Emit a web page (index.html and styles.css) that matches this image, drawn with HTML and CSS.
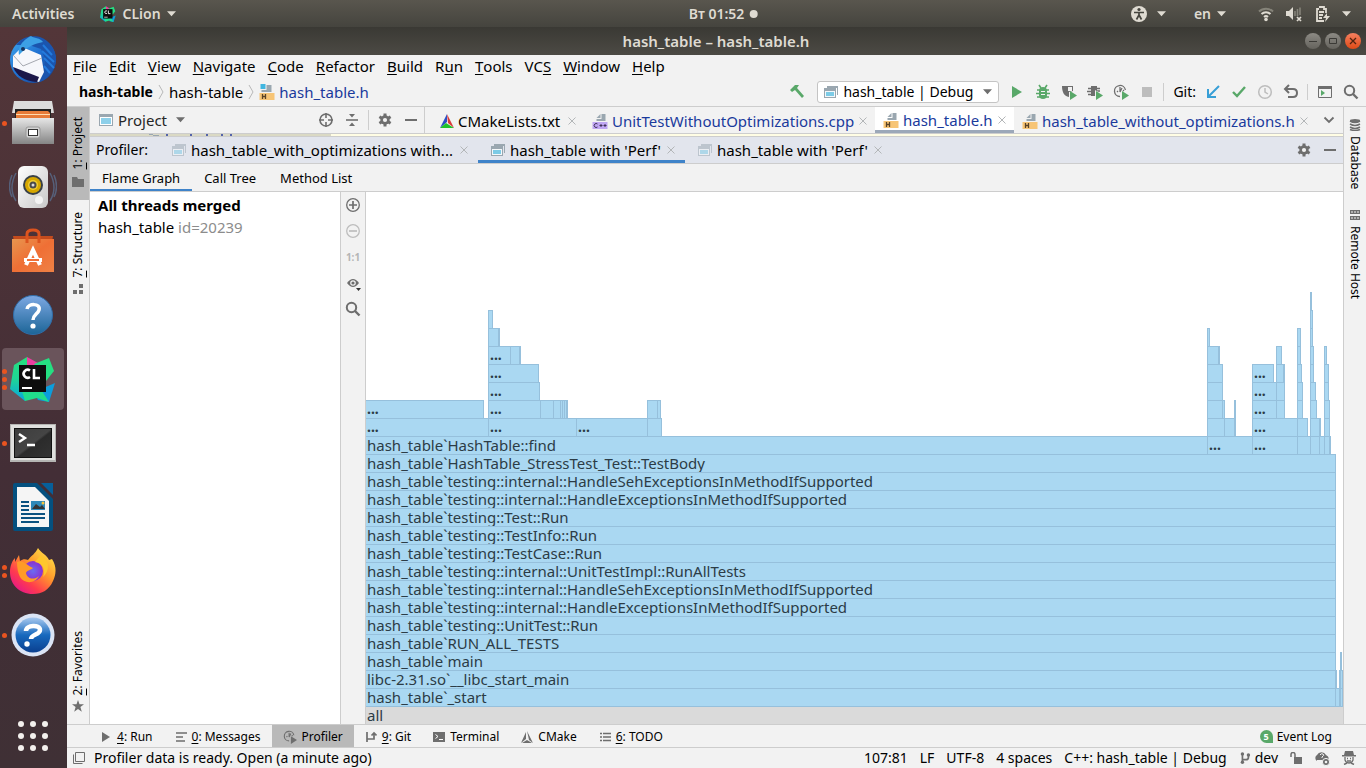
FILE: index.html
```html
<!DOCTYPE html>
<html lang="en">
<head>
<meta charset="utf-8">
<title>hash_table – hash_table.h</title>
<link rel="stylesheet" href="styles.css">
</head>
<body>
<svg class="defs" aria-hidden="true">
  <defs>
    <symbol id="window" viewBox="0 0 14 14"><path d="M3 1h11v9h-1V3H3z" fill="#9aa7b0"/><path d="M0 3h12v10H0z" fill="#9aa7b0"/><path d="M1 6h10v6H1z" fill="#f4f8fa"/><path d="M2 7h8v4H2z" fill="#7ccbe6"/></symbol>
    <symbol id="hfile" viewBox="0 0 15 16"><path d="M4 5 8 1v4zM9 1h4v7H4V6h5z" fill="#9aa7b0"/><path d="M0 9h15v7H0z" fill="#f7c576"/><path d="M3 10v5M6 10v5M3 12.500h3" stroke="#594328" stroke-width="1.300" fill="none"/></symbol>
    <symbol id="cppfile" viewBox="0 0 15 16"><path d="M4 5 8 1v4zM9 1h4v7H4V6h5z" fill="#9aa7b0"/><path d="M0 9h15v7H0z" fill="#bfa6f3"/><path d="M5 11a2 2 0 1 0 0 3M7 12.500h3M8.500 11v3M11 12.500h3M12.500 11v3" stroke="#403359" fill="none"/></symbol>
    <symbol id="close" viewBox="0 0 8 8"><path d="m.5.5 7 7m0-7-7 7" stroke="#b3b6b8" fill="none"/></symbol>
    <symbol id="caret" viewBox="0 0 10 6"><path d="M0 0h10L5 5.500z" fill="currentColor"/></symbol>
    <symbol id="gear" viewBox="0 0 14 14"><g stroke="#6e6e6e" stroke-width="3"><path d="M7 0.500v13M1.400 3.700l11.200 6.600M12.600 3.700 1.400 10.300"/></g><circle cx="7" cy="7" r="4.700" fill="#6e6e6e"/><circle cx="7" cy="7" r="2.100" fill="#f2f2f2"/></symbol>
    <symbol id="search" viewBox="0 0 16 16"><circle cx="6.500" cy="6.500" r="4.700" fill="none" stroke="#6e6e6e" stroke-width="2"/><path d="m10 10 4.500 4.500" stroke="#6e6e6e" stroke-width="2.400"/></symbol>
    <symbol id="profile" viewBox="0 0 16 16"><path d="M7 12.500A5.500 5.500 0 1 1 12.400 6M4 8l1-1M7 3v5L9 4M10 7l1-1" stroke="#6e6e6e" stroke-width="1.300" fill="none"/></symbol>
    <symbol id="branch" viewBox="0 0 12 14"><path d="M3 2v10M3 9h4c2 0 3-1 3-3V4" stroke="#6e6e6e" stroke-width="2" fill="none"/><circle cx="3" cy="2.200" r="2" fill="#6e6e6e"/><circle cx="10" cy="3.500" r="2" fill="#6e6e6e"/><circle cx="3" cy="12" r="2" fill="#6e6e6e"/></symbol>
    <linearGradient id="g-bird" x1="0" y1="0" x2="1" y2="1"><stop stop-color="#3fa9ee"/><stop offset=".5" stop-color="#1f6fd0"/><stop offset="1" stop-color="#15347c"/></linearGradient>
    <linearGradient id="g-steel" x1="0" y1="0" x2="0" y2="1"><stop stop-color="#e6e6e6"/><stop offset="1" stop-color="#858585"/></linearGradient>
    <linearGradient id="g-white" x1="0" y1="0" x2="1" y2="1"><stop stop-color="#fff"/><stop offset="1" stop-color="#c8c8c8"/></linearGradient>
    <linearGradient id="g-bag" x1="0" y1="0" x2="1" y2="1"><stop stop-color="#e8964f"/><stop offset=".5" stop-color="#ef6f35"/><stop offset="1" stop-color="#ef8145"/></linearGradient>
    <linearGradient id="g-help" x1="0" y1="0" x2="0" y2="1"><stop stop-color="#7da8e3"/><stop offset="1" stop-color="#1c6597"/></linearGradient>
    <linearGradient id="g-term" x1="0" y1="0" x2="1" y2="1"><stop stop-color="#3d3d3d"/><stop offset=".5" stop-color="#454545"/><stop offset=".55" stop-color="#2b2b2b"/><stop offset="1" stop-color="#333"/></linearGradient>
    <linearGradient id="g-fox" x1="1" y1="0" x2=".2" y2="1"><stop stop-color="#fff44f"/><stop offset=".45" stop-color="#ff9a2b"/><stop offset=".75" stop-color="#ff3b4e"/><stop offset="1" stop-color="#e3158c"/></linearGradient>
    <radialGradient id="g-globe"><stop stop-color="#6a6cf0"/><stop offset="1" stop-color="#8b2fd0"/></radialGradient>
    <linearGradient id="g-orb" x1="0" y1="0" x2="0" y2="1"><stop stop-color="#a8c9ef"/><stop offset=".5" stop-color="#1769be"/><stop offset="1" stop-color="#0a3f8f"/></linearGradient>
    <linearGradient id="g-cla" x1="0" y1="0" x2="0" y2="1"><stop stop-color="#26e07d"/><stop offset=".5" stop-color="#1fd596"/><stop offset="1" stop-color="#08a5e0"/></linearGradient>
    <symbol id="clion" viewBox="0 0 46 46"><path d="M4 9 17 1l4 8-4 22-2 14L0 33z" fill="url(#g-cla)"/><path d="m17 1 11 6-8 5h-3z" fill="#ec3ea0"/><path d="m24 8 15-6 5 13-8 10z" fill="#25df82"/><path d="M24 36 45 27l-6 19-11-2z" fill="#0c9ddc"/><path d="M12 35h20l7 11-12-4-12 3z" fill="#20dd8c"/><path d="M9 9h27v27H9z" fill="#0d0d0d"/><path d="M20 14.500a4 4 0 1 0 0 6.500M24 13v9h6" stroke="#fff" stroke-width="2.600" fill="none"/><path d="M12 31h10v2H12z" fill="#fff"/></symbol>
  </defs>
</svg>

<header class="topbar">
  <button class="top-btn">Activities</button>
  <button class="top-btn app"><svg class="i16"><use href="#clion"/></svg>CLion<svg class="caret"><use href="#caret"/></svg></button>
  <button class="top-btn clock">Вт 01:52<span class="dot"></span></button>
  <div class="tray">
    <button class="top-btn" aria-label="Accessibility"><svg class="i16" viewBox="0 0 16 16"><circle cx="8" cy="8" r="8" fill="#dfdbd2"/><circle cx="8" cy="3.500" r="1.600" fill="#45443e"/><path d="M3 6.500h10M8 6v4M8 9l-2.500 4.500M8 9l2.500 4.500" stroke="#45443e" stroke-width="1.700" fill="none"/></svg><svg class="caret"><use href="#caret"/></svg></button>
    <button class="top-btn">en<svg class="caret"><use href="#caret"/></svg></button>
    <button class="top-btn status" aria-label="System">
      <svg class="i16" viewBox="0 0 16 16"><path d="M1 5.500a10 10 0 0 1 14 0" stroke="#858379" stroke-width="2" fill="none"/><path d="M3.500 8a6.500 6.500 0 0 1 9 0M6 11a3 3 0 0 1 4 0" stroke="#dfdbd2" stroke-width="2" fill="none"/><circle cx="8" cy="13.500" r="1.800" fill="#dfdbd2"/></svg>
      <svg class="i16" viewBox="0 0 16 16"><path d="M0 5h3l4-4v13l-4-4H0z" fill="#dfdbd2"/><path d="M9 5v5M11.500 3v7M14 1.500V9" stroke="#858379" stroke-width="1.600"/><path d="m11 11 4 4m0-4-4 4" stroke="#dfdbd2" stroke-width="1.700"/></svg>
      <svg class="i16" viewBox="0 0 16 16"><path d="M5 1h5v2h2v4M10 15H3V3h2M5 6h5M5 9h4M5 12h3" stroke="#dfdbd2" stroke-width="1.800" fill="none"/><path d="m13 7-4 5h3l-1 4 5-6h-3z" fill="#dfdbd2"/></svg>
      <svg class="caret"><use href="#caret"/></svg>
    </button>
  </div>
</header>

<div class="desktop">
  <nav class="dock" aria-label="Dock">
    <button aria-label="Thunderbird"><svg viewBox="0 0 48 48"><circle cx="24" cy="25" r="23" fill="url(#g-bird)"/><path d="M7 10C14-1 28 1 31 2c10 4 17 13 16 25-4 14-12 20-18 20 8-9 10-20 3-33l-12-4z" fill="#1b55ae"/><path d="M4 21 13 12l19 8 3 17-5 10C16 43 7 37 4 32z" fill="#f6f7fb"/><path d="m4 20 10 11 19-8" fill="none" stroke="#a5a8b0"/><path d="m4 32 26 10-2 5C15 46 8 41 4 32z" fill="#1b1749"/><path d="M10 20C8 8 20 2 22 1c2 2 10 2 12 6-8 2-16 4-24 13z" fill="#3ca0e5"/><circle cx="14" cy="14" r="2" fill="#163460"/><path d="m34 10 9 10M33 16l12 11M35 23l10 10M35 31l6 7" stroke="#237bdd" stroke-width="2"/></svg></button>
    <button class="run1" aria-label="Files"><svg viewBox="0 0 48 48"><path d="M5 2h38l2 12H3z" fill="#dcdcdc"/><path d="M6 10h36v14H6z" fill="#222"/><path d="M7 14 9 12h30l2 2v6H7z" fill="#e77b38"/><path d="M7 15.500h34" stroke="#ffdbb0" stroke-width="1"/><path d="M3 19h42v26H3z" fill="url(#g-steel)"/><rect x="17" y="28" width="14" height="11" rx="2" fill="#d3d3d3" stroke="#999"/><rect x="19.500" y="30.500" width="9" height="6" fill="#fff" stroke="#333"/></svg></button>
    <button aria-label="Rhythmbox"><svg viewBox="0 0 48 48"><path d="M7 10q-8 15 0 28M3 12q-5 12 0 22M41 10q8 15 0 28M45 12q5 12 0 22" stroke="#56607a" stroke-width="1.500" fill="none"/><rect x="9" y="3" width="30" height="42" rx="6" fill="url(#g-white)"/><circle cx="24" cy="22" r="10" fill="#384047"/><circle cx="24" cy="22" r="8" fill="#d6a700"/><circle cx="24" cy="22" r="5" fill="#f1ce31"/><circle cx="24" cy="22" r="3.500" fill="#4a4a4a"/><circle cx="24" cy="22" r="1.500" fill="#ddd"/><circle cx="30" cy="37" r="4" fill="#f3f3f3"/></svg></button>
    <button aria-label="Software"><svg viewBox="0 0 48 48"><path d="M4 9h40l-1 6H5z" fill="#c34b1d"/><path d="M3 12h42v33H3z" fill="url(#g-bag)"/><path d="M18 16V7q0-4 6-4t6 4v9" stroke="#dc541f" stroke-width="3" fill="none"/><path d="m17 38 7-15 7 15M15 33h18" stroke="#fff" stroke-width="4" fill="none"/><path d="M18 33h12" stroke="#ef7038" stroke-width="2"/></svg></button>
    <button aria-label="Help"><svg viewBox="0 0 48 48"><circle cx="24" cy="24" r="19.500" fill="url(#g-help)" stroke="#306da8"/><path d="M18 18c1-6 14-6 12 1-1 4-6 5-6 10" stroke="#fff" stroke-width="3.500" fill="none"/><circle cx="24" cy="35" r="2.600" fill="#fff"/></svg></button>
    <button class="active run3" aria-label="CLion"><svg viewBox="0 0 48 48"><use href="#clion" x="1" y="1" width="46" height="46"/></svg></button>
    <button class="run1" aria-label="Terminal"><svg viewBox="0 0 48 48"><path d="M1 5h46v38H1z" fill="#b5b5b3"/><path d="M2 6h44v35H2z" fill="#e0e0de"/><path d="M5 9h38v30H5z" fill="#111"/><path d="M6 10h36v28H6z" fill="url(#g-term)"/><path d="m10 15 6 4-6 4M18 26h8" stroke="#fff" stroke-width="2.400" fill="none"/></svg></button>
    <button aria-label="LibreOffice Writer"><svg viewBox="0 0 48 48"><path d="M6 0h22l16 16v30q0 2-2 2H6q-2 0-2-2V2q0-2 2-2z" fill="#04507f"/><path d="M32 0h12v12z" fill="#075f9a"/><path d="M8 4h18l14 14v26H8z" fill="#f5f5f5"/><path d="M12 19h8M12 23h8M12 27h8M12 31h24M12 35h24M12 39h18" stroke="#0b5280" stroke-width="2"/><path d="M22 18h14v9H22z" fill="#2d88b8"/><path d="m23 26 4-5 4 3 2-2 3 4z" fill="#343434"/><circle cx="34" cy="20" r="1.500" fill="#f6c43b"/></svg></button>
    <button class="run2" aria-label="Firefox"><svg viewBox="0 0 48 48"><path d="M29 1c3 5 9 7 11 12l3-1c6 9 3 18 1 22C40 43 33 47 24 47 10 47 1 37 1 25c0-6 2-11 5-14v4l4-7 1 6c3-2 5-2 8-1 4-5 7-6 10-12z" fill="url(#g-fox)"/><circle cx="24" cy="24" r="10" fill="url(#g-globe)"/><path d="M8 15c6-3 9 3 16 6-2 2-6 2-7 5 1 5 7 8 13 3-4 8-15 8-19 1-2-4-3-9-3-15z" fill="#ff9b27"/><path d="M26 15c8 1 11 8 8 15 7-6 7-17-2-22z" fill="#ffc72d"/></svg></button>
    <button class="run1" aria-label="Assistant"><svg viewBox="0 0 48 48"><circle cx="24" cy="24" r="21.500" fill="#dbe4f5"/><circle cx="24" cy="24" r="17.500" fill="url(#g-orb)"/><path d="M17 20c0-6 14-7 14-1 0 5-9 4-9 9" stroke="#fff" stroke-width="4.500" fill="none"/><circle cx="18" cy="33" r="2.700" fill="#fff"/></svg></button>
    <button class="apps" aria-label="Show applications"><svg viewBox="0 0 48 48" fill="#f3f0ed"><circle cx="12" cy="12" r="3"/><circle cx="24" cy="12" r="3"/><circle cx="36" cy="12" r="3"/><circle cx="12" cy="24" r="3"/><circle cx="24" cy="24" r="3"/><circle cx="36" cy="24" r="3"/><circle cx="12" cy="36" r="3"/><circle cx="24" cy="36" r="3"/><circle cx="36" cy="36" r="3"/></svg></button>
  </nav>

  <main class="ide">
    <div class="titlebar">
      <h1>hash_table – hash_table.h</h1>
      <div class="winbtns">
        <button aria-label="Minimize"><svg viewBox="0 0 16 16"><path d="M4 8.500h8" stroke="#3b3a36"/></svg></button>
        <button aria-label="Maximize"><svg viewBox="0 0 16 16"><path d="M4.500 5.500h7v5h-7z" stroke="#3b3a36" fill="none"/></svg></button>
        <button class="close" aria-label="Close"><svg viewBox="0 0 16 16"><path d="m5 5 6 6m0-6-6 6" stroke="#51230f" stroke-width="1.300"/></svg></button>
      </div>
    </div>
    <nav class="menubar">
      <button><u>F</u>ile</button><button><u>E</u>dit</button><button><u>V</u>iew</button><button><u>N</u>avigate</button><button><u>C</u>ode</button><button><u>R</u>efactor</button><button><u>B</u>uild</button><button>R<u>u</u>n</button><button><u>T</u>ools</button><button>VC<u>S</u></button><button><u>W</u>indow</button><button><u>H</u>elp</button>
    </nav>
    <div class="toolbar">
      <div class="crumbs">
        <a href="#project"><b>hash-table</b></a><svg class="sep" viewBox="0 0 6 16"><path d="m1 1 4 7-4 7" stroke="#b8b8b8" fill="none"/></svg>
        <a href="#folder">hash-table</a><svg class="sep" viewBox="0 0 6 16"><path d="m1 1 4 7-4 7" stroke="#b8b8b8" fill="none"/></svg>
        <a href="#file" class="vcs"><svg class="i16" viewBox="0 0 15 16"><path d="M1 0h5v5H1z" fill="#40b6e0"/><path d="M7 1h5v7H2V6h5z" fill="#9aa7b0"/><path d="M0 9h15v7H0z" fill="#f7c576"/><path d="M3 10v5M6 10v5M3 12.500h3" stroke="#594328" stroke-width="1.300" fill="none"/></svg>hash_table.h</a>
      </div>
      <div class="actions">
        <button aria-label="Build"><svg class="i16" viewBox="0 0 16 16"><path d="M1 6 6 1h4L8 4l7 8-2 2-7-8-3 2z" fill="#59a869"/></svg></button>
        <button class="config"><svg class="i14"><use href="#window"/></svg>hash_table | Debug<svg class="caret"><use href="#caret"/></svg></button>
        <div class="runs">
          <button aria-label="Run"><svg class="i16" viewBox="0 0 16 16"><path d="M3 2v12l10-6z" fill="#59a869"/></svg></button>
          <button aria-label="Debug"><svg class="i16" viewBox="0 0 16 16"><path d="m4 1 2 3m6-3-2 3M2 6h12M1 9.500h14M2 13h12" stroke="#59a869" stroke-width="1.600"/><rect x="4" y="3" width="8" height="12" rx="4" fill="#59a869"/><path d="M6 7.500h4M6 10.500h4" stroke="#f2f2f2"/></svg></button>
          <button aria-label="Coverage"><svg class="i16" viewBox="0 0 16 16"><path d="M1 2h11v5L8 8v5C3 12 1 8 1 2z" fill="#6e6e6e"/><path d="M7 3h4v4H7z" fill="#f2f2f2"/><path d="M9 7v9l7-4.500z" fill="#59a869"/></svg></button>
          <button aria-label="Valgrind"><svg class="i16" viewBox="0 0 16 16"><path d="M4 2h6v10H4z" fill="#6e6e6e"/><path d="M1 4.500h12M0 7.500h4M1 10.500h4M10 7h3" stroke="#6e6e6e" stroke-width="1.300"/><path d="M8 6v10l8-5z" fill="#f2f2f2"/><path d="M9 7v9l7-4.500z" fill="#59a869"/></svg></button>
          <button aria-label="Profile"><svg class="i16" viewBox="0 0 16 16"><use href="#profile"/><path d="M9 7v9l7-4.500z" fill="#59a869"/></svg></button>
          <button aria-label="Stop"><svg class="i16" viewBox="0 0 16 16"><path d="M3 3h10v10H3z" fill="#bdbdbd"/></svg></button>
        </div>
        <span class="git">Git:</span>
        <div class="runs">
          <button aria-label="Update"><svg class="i16" viewBox="0 0 16 16"><path d="M14 2 4 12M3 5v8h8" stroke="#389fd6" stroke-width="2" fill="none"/></svg></button>
          <button aria-label="Commit"><svg class="i16" viewBox="0 0 16 16"><path d="m2 8 4 4 8-9" stroke="#59a869" stroke-width="2.400" fill="none"/></svg></button>
          <button aria-label="History"><svg class="i16" viewBox="0 0 16 16"><circle cx="8" cy="8" r="6.300" fill="none" stroke="#bdbdbd" stroke-width="1.500"/><path d="M8 4v4l3 2" stroke="#bdbdbd" stroke-width="1.500" fill="none"/></svg></button>
          <button aria-label="Rollback"><svg class="i16" viewBox="0 0 16 16"><path d="M6 1 2 5l4 4M2 5h8q4 0 4 4t-4 4H5" stroke="#6e6e6e" stroke-width="2" fill="none"/></svg></button>
        </div>
        <div class="runs last">
          <button aria-label="Run anything"><svg class="i16" viewBox="0 0 16 16"><path d="M1.500 2.500h13v11h-13z" stroke="#6e6e6e" fill="none"/><path d="M1 2h14v3H1z" fill="#6e6e6e"/><path d="M4 6v6l4-3z" fill="#59a869"/></svg></button>
          <button aria-label="Search everywhere"><svg class="i16"><use href="#search"/></svg></button>
        </div>
      </div>
    </div>

    <div class="workspace">
      <aside class="stripe left">
        <button class="on"><svg viewBox="0 0 12 12"><path d="M0 1h5l1 2h6v8H0z" fill="#6e6e6e"/></svg><span><u>1</u>: Project</span></button>
        <button class="second"><svg viewBox="0 0 12 12" fill="#6e6e6e"><path d="M7 1h4v4H7zM1 7h4v4H1zM7 7h4v4H7z"/></svg><span><u>7</u>: Structure</span></button>
        <button class="bottom"><svg class="star" viewBox="0 0 12 12"><path d="m6 0 1.500 4.200H12L8.400 7l1.400 4.800L6 9l-3.800 2.800L3.600 7 0 4.200h4.500z" fill="#6e6e6e"/></svg><span><u>2</u>: Favorites</span></button>
      </aside>

      <section class="center">
        <div class="editor-head">
          <div class="project-head">
            <button class="project"><svg class="i14" viewBox="0 0 14 14"><path d="M0 1h14v12H0z" fill="#9aa7b0"/><path d="M1 4h12v8H1z" fill="#fff"/><path d="M2 5h10v6H2z" fill="#8dd0ea"/></svg>Project<svg class="caret"><use href="#caret"/></svg></button>
            <button aria-label="Locate"><svg class="i16" viewBox="0 0 16 16"><circle cx="8" cy="8" r="6" fill="none" stroke="#6e6e6e" stroke-width="1.600"/><path d="M8 1v5M8 10v5M1 8h5M10 8h5" stroke="#6e6e6e" stroke-width="1.600"/></svg></button>
            <button aria-label="Collapse all"><svg class="i16" viewBox="0 0 16 16"><path d="M2 8h12" stroke="#6e6e6e" stroke-width="1.600"/><path d="M5 2h6L8 5.500zM5 14h6l-3-3.500z" fill="#6e6e6e"/></svg></button>
            <i class="vr"></i>
            <button class="tool" aria-label="Settings"><svg class="i14"><use href="#gear"/></svg></button>
            <button class="tool" aria-label="Hide"><svg class="i14" viewBox="0 0 14 14"><path d="M1 7h12" stroke="#6e6e6e" stroke-width="2"/></svg></button>
          </div>
          <div class="etabs">
            <div class="etab cm"><svg class="i14" viewBox="0 0 14 14"><path d="M7 0v8L0 14z" fill="#2b4fc4"/><path d="m7 0 7 14-6-5z" fill="#d93a3a"/><path d="m0 14 6-5 8 5z" fill="#1fc22b"/></svg><span class="plain">CMakeLists.txt</span><button aria-label="Close"><svg><use href="#close"/></svg></button></div>
            <div class="etab cpp"><svg class="i16"><use href="#cppfile"/></svg><span>UnitTestWithoutOptimizations.cpp</span><button aria-label="Close"><svg><use href="#close"/></svg></button></div>
            <div class="etab sel"><svg class="i16"><use href="#hfile"/></svg><span>hash_table.h</span><button aria-label="Close"><svg><use href="#close"/></svg></button></div>
            <div class="etab wo"><svg class="i16"><use href="#hfile"/></svg><span>hash_table_without_optimizations.h</span><button aria-label="Close"><svg><use href="#close"/></svg></button></div>
            <button class="more" aria-label="More tabs"><svg viewBox="0 0 12 8"><path d="m1.500 1.500 4.500 4.500 4.500-4.500" stroke="#6e6e6e" stroke-width="1.800" fill="none"/></svg></button>
          </div>
        </div>
        <div class="sliver"><svg viewBox="0 0 241 2"><path d="M59 0h4v1h6v1h-6V1h-4z" fill="#9aa7b0"/><path d="M76 0h2v2h-2zM100 0h2v2h-2zM116 0h2v2h-2zM131 0h2v2h-2zM140 0h2v2h-2z" fill="#5564a8"/></svg></div>

        <div class="prof-head">
          <span class="prof-title">Profiler:</span>
          <div class="ptab dim first"><svg class="i14"><use href="#window"/></svg><span>hash_table_with_optimizations with...</span><button aria-label="Close"><svg><use href="#close"/></svg></button></div>
          <div class="ptab sel"><svg class="i14"><use href="#window"/></svg><span>hash_table with 'Perf'</span><button aria-label="Close"><svg><use href="#close"/></svg></button></div>
          <div class="ptab dim"><svg class="i14"><use href="#window"/></svg><span>hash_table with 'Perf'</span><button aria-label="Close"><svg><use href="#close"/></svg></button></div>
          <div class="prof-tools">
            <button aria-label="Settings"><svg class="i14"><use href="#gear"/></svg></button>
            <button aria-label="Hide"><svg class="i14" viewBox="0 0 14 14"><path d="M1 7h12" stroke="#6e6e6e" stroke-width="2"/></svg></button>
          </div>
        </div>
        <div class="views"><button class="sel">Flame Graph</button><button>Call Tree</button><button>Method List</button></div>

        <div class="profile">
          <div class="threads"><p><b>All threads merged</b></p><p>hash_table <span>id=20239</span></p></div>
          <div class="zoombar">
            <button aria-label="Zoom in"><svg class="i16" viewBox="0 0 16 16"><circle cx="8" cy="8" r="6.300" fill="none" stroke="#6e6e6e" stroke-width="1.300"/><path d="M4 8h8M8 4v8" stroke="#6e6e6e" stroke-width="1.700"/></svg></button>
            <button aria-label="Zoom out"><svg class="i16" viewBox="0 0 16 16"><circle cx="8" cy="8" r="6.300" fill="none" stroke="#bdbdbd" stroke-width="1.300"/><path d="M4 8h8" stroke="#bdbdbd" stroke-width="1.700"/></svg></button>
            <button class="one">1:1</button>
            <button aria-label="Presentation"><svg class="i16" viewBox="0 0 16 16"><path d="M2 8q6-8 12 0-6 8-12 0z" fill="#6e6e6e"/><circle cx="8" cy="8" r="2.800" fill="#f2f2f2"/><circle cx="8" cy="8" r="1.600" fill="#6e6e6e"/><path d="M11 13h5l-2.500 3z" fill="#333"/></svg></button>
            <button aria-label="Find"><svg class="i16"><use href="#search"/></svg></button>
          </div>
          <div class="flame" id="flame"></div>
        </div>
      </section>

      <aside class="stripe right">
        <button><svg viewBox="0 0 12 12"><path d="M1 2q5 3 10 0M1 5q5 3 10 0M1 8q5 3 10 0M1 10.500q5 2 10 0" stroke="#6e6e6e" stroke-width="1.500" fill="none"/><ellipse cx="6" cy="1.500" rx="5" ry="1.500" fill="#6e6e6e"/></svg><span>Database</span></button>
        <button class="second"><svg viewBox="0 0 12 12" fill="#6e6e6e"><path d="M1 1h10v4H1zM1 7h10v4H1z"/><path d="M3 2v2M6 2v2M3 8v2M6 8v2M9 2v2M9 8v2" stroke="#f2f2f2"/></svg><span>Remote Host</span></button>
      </aside>
    </div>

    <nav class="tools">
      <button><svg class="i12" viewBox="0 0 12 12"><path d="M2 1v10l8-5z" fill="#6e6e6e"/></svg><span><u>4</u>: Run</span></button>
      <button><svg class="i12" viewBox="0 0 12 12"><path d="M1 2h11M1 6h7M1 10h9" stroke="#6e6e6e" stroke-width="1.700"/></svg><span><u>0</u>: Messages</span></button>
      <button class="on"><svg class="i14" viewBox="0 0 16 16"><use href="#profile"/><path d="M9 7v9l7-4.500z" fill="#6e6e6e"/></svg><span>Profiler</span></button>
      <button><svg class="i12" viewBox="0 0 12 12"><path d="M2 1v10M2 8h7V2M6.500 4.500 9 2l2.500 2.500" stroke="#6e6e6e" stroke-width="1.700" fill="none"/></svg><span><u>9</u>: Git</span></button>
      <button><svg class="i12" viewBox="0 0 12 12"><path d="M0 1h12v10H0z" fill="#6e6e6e"/><path d="m2.500 3.500 2.500 2-2.500 2M6 8.500h4" stroke="#fff" fill="none"/></svg><span>Terminal</span></button>
      <button><svg class="i12" viewBox="0 0 12 12"><path d="m6 0 6 12-4-3zM5 1v7l-5 4zM1 12l5-3 5 3z" fill="#6e6e6e"/></svg><span>CMake</span></button>
      <button><svg class="i12" viewBox="0 0 12 12"><path d="M1 2.500h2M4 2.500h8M1 6h2M4 6h8M1 9.500h2M4 9.500h8" stroke="#6e6e6e" stroke-width="1.500"/></svg><span><u>6</u>: TODO</span></button>
      <button class="event"><i>5</i><span>Event Log</span></button>
    </nav>
    <footer class="statusbar">
      <button aria-label="Tool windows"><svg class="i14" viewBox="0 0 14 14"><path d="M3.500 1.500h9v9h-9zM1.500 3.500v9h9" stroke="#6e6e6e" fill="none"/></svg></button>
      <span class="msg">Profiler data is ready. Open (a minute ago)</span>
      <button>107:81</button><button>LF</button><button>UTF-8</button><button>4 spaces</button><button class="ctx">C++: hash_table | Debug</button>
      <button class="git-branch"><svg class="i12"><use href="#branch"/></svg>dev</button>
      <button aria-label="Writable"><svg class="i12" viewBox="0 0 12 12"><path d="M4 5h8v7H4z" fill="#6e6e6e"/><path d="M1 5V2.500q0-2 2-2t2 2V6" stroke="#6e6e6e" stroke-width="1.500" fill="none"/></svg></button>
      <button aria-label="Sync"><svg class="i16" viewBox="0 0 16 16"><path d="M3 11a3.500 3.500 0 0 1 0-6 5 5 0 0 1 9 0q4 2 2 5H3z" fill="#6e6e6e"/><path d="M6 5q1-2 3-1t-1 3v1" stroke="#f2f2f2" fill="none"/><circle cx="12" cy="12" r="3.600" fill="#6e6e6e" stroke="#f2f2f2"/><circle cx="12" cy="12" r="1.300" fill="#f2f2f2"/></svg></button>
      <button aria-label="Inspections"><svg class="i14" viewBox="0 0 14 14"><path d="M3 0h8l1 4h2v1.500H0V4h2z" fill="#6e6e6e"/><path d="M3 6v3q1 3 4 3t4-3V6" stroke="#6e6e6e" stroke-width="1.300" fill="none"/><path d="M5 7.500h1M8 7.500h1M5 10h4M2 13.500 5 12M12 13.500 9 12" stroke="#6e6e6e" stroke-width="1.500"/></svg></button>
    </footer>
  </main>
</div>
<script src="flame.js"></script>
</body>
</html>
```
FILE: flame.js
```js
// Each row lists its frames as [start, end, label], from the deepest call to the root.
const SPAN = 977;
const body = (label) => [[0, 970, label]];
const rows = [
  [[944, 946]],
  [[122, 127], [944, 947]],
  [[122, 133], [132, 134], [841, 844], [931, 935], [944, 947]],
  [[122, 145, '...'], [144, 154], [153, 155], [841, 853], [852, 854], [910, 916], [931, 935], [944, 948], [958, 961]],
  [[122, 173, '...'], [841, 857], [886, 908, '...'], [910, 918], [917, 919], [931, 936], [944, 948], [958, 963]],
  [[122, 174, '...'], [841, 857], [886, 911, '...'], [910, 919], [931, 937], [944, 950], [958, 963]],
  [[0, 118, '...'], [122, 175, '...'], [174, 188], [187, 195], [194, 197], [196, 199], [198, 201], [200, 202], [281, 292], [291, 295], [841, 857], [856, 859], [868, 870], [886, 911, '...'], [910, 919], [931, 937], [944, 951], [958, 964]],
  [[0, 123, '...'], [122, 211, '...'], [210, 282, '...'], [281, 296], [841, 859], [858, 869], [868, 870], [886, 932, '...'], [931, 942], [944, 954], [953, 955], [958, 964]],
  [[0, 842, 'hash_table`HashTable::find'], [841, 887, '...'], [886, 932, '...'], [931, 945], [944, 954], [953, 959], [958, 964], [963, 965]],
  body('hash_table`HashTable_StressTest_Test::TestBody'),
  body('hash_table`testing::internal::HandleSehExceptionsInMethodIfSupported'),
  body('hash_table`testing::internal::HandleExceptionsInMethodIfSupported'),
  body('hash_table`testing::Test::Run'),
  body('hash_table`testing::TestInfo::Run'),
  body('hash_table`testing::TestCase::Run'),
  body('hash_table`testing::internal::UnitTestImpl::RunAllTests'),
  body('hash_table`testing::internal::HandleSehExceptionsInMethodIfSupported'),
  body('hash_table`testing::internal::HandleExceptionsInMethodIfSupported'),
  body('hash_table`testing::UnitTest::Run'),
  body('hash_table`RUN_ALL_TESTS'),
  [[0, 970, 'hash_table`main'], [974, 976]],
  [[0, 970, 'libc-2.31.so`__libc_start_main'], [969, 971], [973, 975], [974, 977]],
  [[0, 970, 'hash_table`_start'], [969, 974], [973, 975], [974, 977]],
  [[0, 977, 'all']]
];

const flame = document.getElementById('flame');
rows.forEach((frames, index) => {
  const row = document.createElement('div');
  row.className = index === rows.length - 1 ? 'frow root' : 'frow';
  let previous = 0;
  frames.forEach(([start, end, label]) => {
    const frame = document.createElement('div');
    frame.className = ['frame', label === '...' && 'short', start === 0 && 'edge'].filter(Boolean).join(' ');
    frame.style.marginLeft = (start - previous) / SPAN * 100 + '%';
    frame.style.width = (end - start) / SPAN * 100 + '%';
    if (label) frame.textContent = label;
    row.append(frame);
    previous = end;
  });
  flame.append(row);
});
```
FILE: styles.css
```css
* { box-sizing: border-box; }
html, body { height: 100%; margin: 0; }
body { display: flex; flex-direction: column; overflow: hidden; font: 15px/18px "Noto Sans", "Open Sans", sans-serif; color: #000; background: #f2f2f2; }
button { display: flex; align-items: center; margin: 0; padding: 0; border: 0; background: none; font: inherit; color: inherit; white-space: nowrap; }
a { display: flex; align-items: center; gap: 4px; color: inherit; text-decoration: none; }
u { text-underline-offset: 2px; }
svg { display: block; flex: none; }
.defs { position: absolute; width: 0; height: 0; }
.i12 { width: 12px; height: 12px; }
.i14 { width: 14px; height: 14px; }
.i16 { width: 16px; height: 16px; }
.caret { width: 9px; height: 6px; }

.topbar { flex: none; display: grid; grid-template-columns: auto auto 1fr auto; align-items: center; height: 27px; padding: 0 15px 0 12px; color: #dfdbd2; background: linear-gradient(#59564e, #45443e); font-size: 14px; font-weight: 600; }
.top-btn { gap: 7px; }
.app { margin-left: 26px; gap: 6px; }
.clock { position: absolute; left: 50%; transform: translateX(-50%); margin-left: 40px; gap: 5px; }
.dot { width: 8px; height: 8px; border-radius: 50%; background: #dfdbd2; }
.tray { grid-column: 4; display: flex; gap: 28px; }
.tray .top-btn { gap: 10px; }
.tray .top-btn:nth-child(2) { gap: 6px; }
.tray .status { gap: 12px; margin-left: 4px; }

.desktop { flex: 1; min-height: 0; display: flex; }
.dock { flex: none; width: 67px; display: flex; flex-direction: column; gap: 2px; padding: 1px 0; background: linear-gradient(#533639, #432e36 60%, #3f3035); }
.dock button { width: 62px; height: 62px; margin-left: 2px; justify-content: center; border-radius: 4px; position: relative; }
.dock svg { width: 48px; height: 48px; }
.dock .active { background: #6a545b; }
.dock .apps { margin-top: auto; }
.run1::before, .run2::before, .run3::before { content: ""; position: absolute; left: 0; top: 50%; width: 5px; height: 5px; margin-top: -2px; border-radius: 50%; background: #e95420; }
.run2::before { margin-top: -6px; box-shadow: 0 8px #e95420; }
.run3::before { box-shadow: 0 -8px #e95420, 0 8px #e95420; }

.ide { flex: 1; min-width: 0; display: flex; flex-direction: column; }
.titlebar { flex: none; display: grid; grid-template-columns: 60px 1fr 61px; align-items: center; height: 28px; background: linear-gradient(#3a3934, #4c4a44); color: #dfdbd2; }
.titlebar h1 { grid-column: 2; margin: 0; font-size: 15px; font-weight: 600; text-align: center; }
.winbtns { display: flex; gap: 4px; }
.winbtns button { width: 16px; height: 16px; border-radius: 50%; background: linear-gradient(#8c8a84, #65635d); }
.winbtns svg { width: 16px; height: 16px; }
.winbtns .close { background: linear-gradient(#f58060, #df4a16); }

.menubar { flex: none; display: flex; gap: 12px; height: 22px; padding-left: 6px; }
.toolbar { flex: none; display: flex; justify-content: space-between; height: 30px; padding-left: 12px; border-bottom: 1px solid #cdcdcd; }
.crumbs { display: flex; align-items: center; gap: 5px; }
.crumbs b { font-size: 14px; }
.sep { width: 6px; height: 16px; }
.vcs { color: #1a3a9c; }
.actions { display: flex; align-items: center; font-size: 14px; }
.config { height: 22px; width: 182px; margin: 0 10px 0 12px; padding: 0 6px; gap: 5px; border: 1px solid #c4c4c4; border-radius: 3px; background: #fff; }
.config .caret { margin-left: auto; color: #6e6e6e; }
.runs { display: flex; gap: 10px; }
.git { margin: 0 9px 0 8px; padding-left: 9px; border-left: 1px solid #cdcdcd; }
.last { margin-left: 8px; padding: 0 7px 0 9px; border-left: 1px solid #cdcdcd; }

.workspace { flex: 1; min-height: 0; display: flex; }
.stripe { flex: none; width: 23px; display: flex; flex-direction: column; font-size: 12px; }
.stripe.left { border-right: 1px solid #cdcdcd; }
.stripe.right { border-left: 1px solid #cdcdcd; padding-top: 12px; }
.stripe button { flex-direction: column; gap: 5px; width: 22px; }
.stripe svg { width: 12px; height: 12px; }
.stripe span { writing-mode: vertical-rl; }
.left button { flex-direction: column-reverse; }
.left span { transform: rotate(180deg); }
.left .on { height: 93px; padding-top: 10px; justify-content: flex-end; background: #b9b9b9; }
.left .on svg { margin-top: 2px; }
.left .second { margin-top: 12px; }
.left .bottom { margin-top: auto; padding-bottom: 12px; }
.right .second { margin-top: 20px; }

.center { flex: 1; min-width: 0; display: flex; flex-direction: column; }
.editor-head { flex: none; display: flex; height: 26px; }
.project-head { flex: none; width: 335px; display: flex; align-items: center; gap: 10px; padding: 0 5px 0 9px; border-right: 1px solid #cdcdcd; }
.project { gap: 5px; margin-right: auto; color: #262626; }
.project .caret { margin-left: 4px; color: #6e6e6e; }
.tool { width: 16px; justify-content: center; }
.vr { width: 1px; height: 20px; margin: 0 -2px; background: #cdcdcd; }
.etabs { flex: 1; min-width: 0; display: flex; }
.etab { display: flex; align-items: center; gap: 4px; padding-top: 2px; color: #1a3a9c; white-space: nowrap; }
.etab span { flex: 1; }
.etab .plain { color: #000; }
.cm { width: 151px; padding-left: 15px; }
.cpp { width: 299px; padding-left: 16px; padding-right: 8px; }
.etab.sel { width: 139px; padding: 3px 8px 0; background: #fff; border-bottom: 3px solid #9ca8b8; }
.wo { width: 302px; padding-left: 8px; padding-right: 8px; }
.etab button svg, .ptab button svg { width: 8px; height: 8px; }
.more { margin: 0 8px 0 auto; }
.more svg { width: 12px; height: 8px; }
.sliver { flex: none; height: 3px; border-top: 1px solid #cdcdcd; background: #fffde4; }
.sliver svg { width: 241px; height: 2px; background: #dad9c4; }

.prof-head { flex: none; display: flex; height: 28px; border: solid #cdcdcd; border-width: 1px 0; background: #e2e5ed; white-space: nowrap; }
.prof-title { width: 73px; padding-left: 6px; align-self: center; font-size: 14px; }
.ptab { display: flex; align-items: center; gap: 5px; width: 207px; padding: 0 10px 0 13px; }
.ptab span { flex: 1; }
.ptab.first { width: 315px; padding-left: 9px; }
.ptab.sel { border-bottom: 3px solid #3f83c9; padding-top: 3px; }
.dim > svg { opacity: .5; }
.prof-tools { display: flex; gap: 12px; margin-left: auto; padding-right: 6px; }

.views { flex: none; display: flex; height: 28px; border-bottom: 1px solid #cdcdcd; font-size: 13px; }
.views button { padding: 0 12px; }
.views .sel { padding: 2px 12px 0; border-bottom: 2px solid #3f83c9; }

.profile { flex: 1; min-height: 0; display: flex; background: #fff; }
.threads { flex: none; width: 250px; padding: 2px 8px; }
.threads p { margin: 0; line-height: 22px; }
.threads span { color: #8c8c8c; }
.zoombar { flex: none; width: 26px; display: flex; flex-direction: column; align-items: center; gap: 10px; padding-top: 5px; border: solid #cdcdcd; border-width: 0 1px; background: #f2f2f2; }
.zoombar .one { height: 16px; font-size: 10px; font-weight: 700; color: #b5b5b5; }
.flame { flex: 1; min-width: 0; display: flex; flex-direction: column; justify-content: flex-end; overflow: hidden; color: #2c3c46; }
.frow { flex: none; display: flex; height: 18px; }
.frame { flex: none; overflow: hidden; white-space: nowrap; border: solid #96c0dc; border-width: 1px 1px 0; background: #aad8f2; line-height: 16px; }
.short { padding-left: 1px; font-size: 14px; font-weight: 700; }
.edge { padding-left: 1px; border-left: 0; }
.root .frame { border: 0; border-top: 1px solid #96c0dc; background: #dadada; }

.tools { flex: none; display: flex; height: 24px; padding-left: 22px; border: solid #cdcdcd; border-width: 1px 0; font-size: 12px; }
.tools button { gap: 5px; padding: 1px 11px 0; }
.tools .on { background: #b9b9b9; }
.tools .event { margin-left: auto; padding-right: 34px; gap: 4px; }
.event i { width: 13px; height: 13px; border-radius: 7px 7px 0 7px; background: #59a869; color: #fff; font: 700 9px/13px "Noto Sans", sans-serif; text-align: center; }
.statusbar { flex: none; display: flex; align-items: center; gap: 12px; height: 20px; padding: 0 10px 0 5px; font-size: 14px; }
.msg { margin: 0 auto 0 -4px; }
.git-branch { gap: 4px; }
```
